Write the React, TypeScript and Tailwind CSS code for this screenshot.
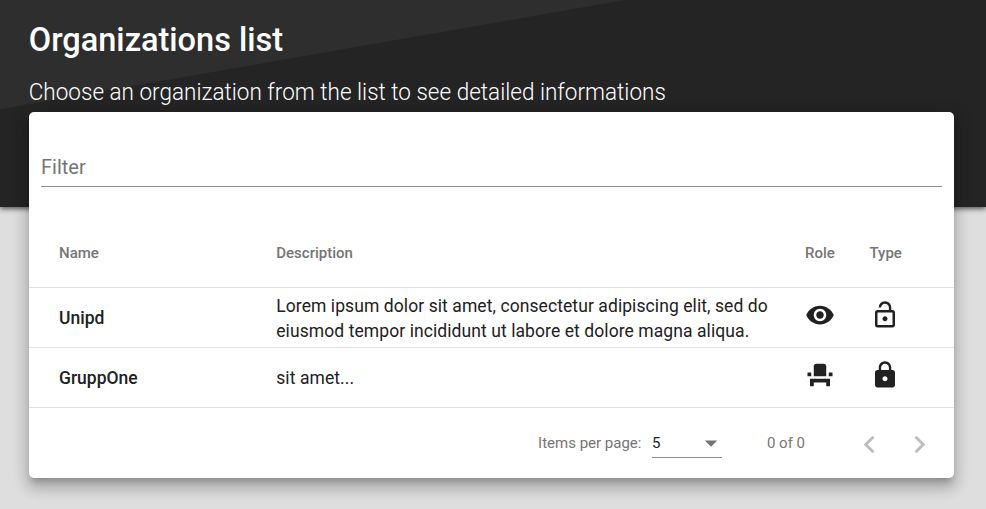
import type { ComponentType } from "react";
import {
  MdArrowDropDown,
  MdChevronLeft,
  MdChevronRight,
  MdEventSeat,
  MdLock,
  MdLockOpen,
  MdVisibility,
} from "react-icons/md";

type Icon = ComponentType<{ className?: string }>;

type Organization = {
  name: string;
  description: string;
  RoleIcon: Icon;
  TypeIcon: Icon;
};

const organizations: Organization[] = [
  {
    name: "Unipd",
    description:
      "Lorem ipsum dolor sit amet, consectetur adipiscing elit, sed do eiusmod tempor incididunt ut labore et dolore magna aliqua.",
    RoleIcon: MdVisibility,
    TypeIcon: MdLockOpen,
  },
  { name: "GruppOne", description: "sit amet...", RoleIcon: MdEventSeat, TypeIcon: MdLock },
];

const rowGrid = "grid grid-cols-[217.25px_528.75px_64.5px_1fr] items-center border-b border-[#e0e0e0] pl-[30px]";

function Hero() {
  return (
    <header className="h-[207px] bg-[linear-gradient(170.09deg,#2e2e2e_107px,#242424_108px)] pl-[28.75px] pt-[20px] text-white shadow-[0_2px_5px_rgba(0,0,0,0.6)]">
      <h1 className="text-[32.5px] leading-[40px] font-medium">Organizations list</h1>
      <p className="mt-[17px] origin-[0_23px] scale-y-[1.06] text-[22.5px] leading-[30px] font-light tracking-[0.01px]">
        Choose an organization from the list to see detailed informations
      </p>
    </header>
  );
}

function Paginator() {
  return (
    <footer className="flex h-[70px] items-center justify-end pr-[17px] text-[15px] text-[#757575]">
      <span className="mr-[10.5px]">Items per page:</span>
      <div className="flex h-[30px] w-[70px] items-center justify-between border-b border-[#8f8f8f] text-[#212121]">
        <span className="pt-px">5</span>
        <MdArrowDropDown className="size-[30px] -mr-1 text-[#757575]" />
      </div>
      <span className="mr-[47px] ml-[45px]">0 of 0</span>
      <div className="mt-[2px] flex gap-[15px] text-[#bdbdbd]">
        <MdChevronLeft className="size-[35px]" />
        <MdChevronRight className="size-[35px]" />
      </div>
    </footer>
  );
}

export default function App() {
  return (
    <div className="h-[509px] overflow-hidden bg-[#dedede] font-[Roboto,sans-serif]">
      <Hero />
      <main className="relative -mt-[95px] ml-[29px] h-[366px] w-[925px] rounded-[5px] bg-white text-[#212121] shadow-[0_6.25px_6.25px_-3.75px_rgba(0,0,0,0.2),0_10px_12.5px_1.25px_rgba(0,0,0,0.14),0_3.75px_17.5px_2.5px_rgba(0,0,0,0.12)]">
        <div className="px-3 pt-[41px]">
          <div className="h-[34px] border-b border-[#8f8f8f] text-[20px] leading-[28px] text-[#757575]">Filter</div>
        </div>
        <div className="mt-[31px]">
          <div className={`${rowGrid} h-[70px] pt-[2px] text-[15px] font-medium text-[#757575]`}>
            <span>Name</span>
            <span>Description</span>
            <span>Role</span>
            <span>Type</span>
          </div>
          {organizations.map(({ name, description, RoleIcon, TypeIcon }) => (
            <div key={name} className={`${rowGrid} h-[60px] pt-[2px] text-[17.5px] leading-[25px]`}>
              <span className="font-medium">{name}</span>
              <span className="pr-5 tracking-[0.08px]">{description}</span>
              <RoleIcon className="-mt-[7px] size-[30px]" />
              <TypeIcon className="-mt-[7px] size-[30px]" />
            </div>
          ))}
        </div>
        <Paginator />
      </main>
    </div>
  );
}
